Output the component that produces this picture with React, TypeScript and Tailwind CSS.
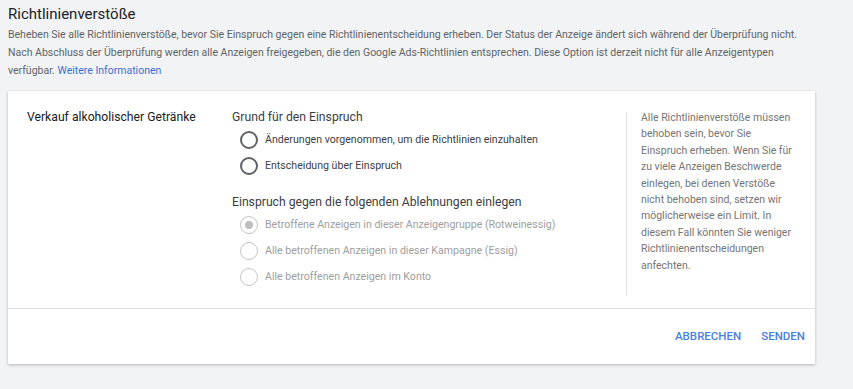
import React from "react";

function Radio({
  label,
  disabled,
  checked,
}: {
  label: string;
  disabled?: boolean;
  checked?: boolean;
}) {
  return (
    <div className="flex h-[26px] items-center pl-2">
      <span
        className={
          disabled
            ? "flex h-[18px] w-[18px] shrink-0 items-center justify-center rounded-full border-[1.5px] border-[#c4c4c4]"
            : "flex h-[18px] w-[18px] shrink-0 items-center justify-center rounded-full border-2 border-[#5f6368]"
        }
      >
        {checked && <span className="h-[8px] w-[8px] rounded-full bg-[#bdbdbd]" />}
      </span>
      <span
        className={
          disabled
            ? "ml-[7px] whitespace-nowrap text-[10.6px] text-[#9e9e9e]"
            : "ml-[7px] whitespace-nowrap text-[10.6px] text-[#3c4043]"
        }
      >
        {label}
      </span>
    </div>
  );
}

export default function App() {
  return (
    <div
      className="h-[389px] w-full overflow-hidden bg-[#f1f3f4]"
      style={{ fontFamily: "Roboto, 'Liberation Sans', sans-serif" }}
    >
      <div className="px-2">
        <h1 className="pt-[2px] text-[15px] leading-6 text-[#202124]">Richtlinienverstöße</h1>
        <p className="whitespace-nowrap text-[10.5px] leading-[18px] text-[#5f6368]">
          Beheben Sie alle Richtlinienverstöße, bevor Sie Einspruch gegen eine
          Richtlinienentscheidung erheben. Der Status der Anzeige ändert sich während der
          Überprüfung nicht.
          <br />
          Nach Abschluss der Überprüfung werden alle Anzeigen freigegeben, die den Google
          Ads-Richtlinien entsprechen. Diese Option ist derzeit nicht für alle Anzeigentypen
          <br />
          verfügbar. <a className="text-[#3b6fd4]">Weitere Informationen</a>
        </p>
      </div>

      <div className="mx-2 mt-[11px] w-[807px] bg-white shadow-[0_1px_3px_rgba(0,0,0,0.25)]">
        <div className="flex pb-[13px] pl-[19px] pt-4">
          <div className="w-[205px] text-[12.2px] leading-5 text-[#202124]">
            Verkauf alkoholischer Getränke
          </div>
          <div className="flex-1 pb-[5px]">
            <div className="text-[12.2px] leading-5 text-[#3c4043]">Grund für den Einspruch</div>
            <Radio label="Änderungen vorgenommen, um die Richtlinien einzuhalten" />
            <Radio label="Entscheidung über Einspruch" />
            <div className="mt-[13px] text-[12.2px] leading-5 text-[#3c4043]">
              Einspruch gegen die folgenden Ablehnungen einlegen
            </div>
            <Radio disabled checked label="Betroffene Anzeigen in dieser Anzeigengruppe (Rotweinessig)" />
            <Radio disabled label="Alle betroffenen Anzeigen in dieser Kampagne (Essig)" />
            <Radio disabled label="Alle betroffenen Anzeigen im Konto" />
          </div>
          <div className="mt-[5px] w-[189px] border-l border-[#e0e0e0] pl-[14px]">
            <p className="-mt-[2px] whitespace-nowrap text-[10.5px] leading-[16.4px] text-[#757575]">
              Alle Richtlinienverstöße müssen
              <br />
              behoben sein, bevor Sie
              <br />
              Einspruch erheben. Wenn Sie für
              <br />
              zu viele Anzeigen Beschwerde
              <br />
              einlegen, bei denen Verstöße
              <br />
              nicht behoben sind, setzen wir
              <br />
              möglicherweise ein Limit. In
              <br />
              diesem Fall könnten Sie weniger
              <br />
              Richtlinienentscheidungen
              <br />
              anfechten.
            </p>
          </div>
        </div>
        <div className="flex h-[56px] items-center justify-end gap-5 border-t border-[#e0e0e0] pr-[10px]">
          <button className="text-[11.5px] font-medium text-[#4a7fe0]">ABBRECHEN</button>
          <button className="text-[11.5px] font-medium text-[#4a7fe0]">SENDEN</button>
        </div>
      </div>
    </div>
  );
}
